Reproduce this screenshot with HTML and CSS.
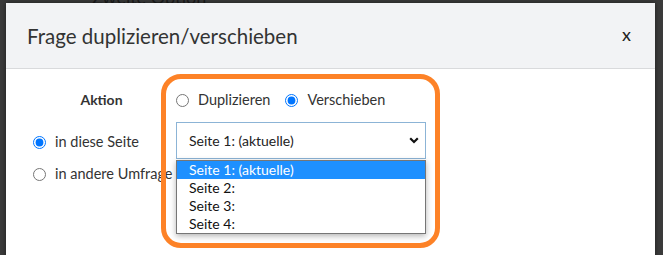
FILE: index.html
```html
<!DOCTYPE html>
<html lang="de">
<head>
    <meta charset="UTF-8">
    <title>Frage duplizieren/verschieben</title>
    <link rel="stylesheet" href="styles.css">
</head>
<body>
    <div class="seite">
        <p class="seite-text">Zweite Option</p>
    </div>

    <div class="modal">
        <div class="modal-kopf">
            <h2 class="modal-titel">Frage duplizieren/verschieben</h2>
            <span class="schliessen">x</span>
        </div>

        <div class="modal-inhalt">
            <div class="feld-label">Aktion</div>
            <div class="aktion-gruppe">
                <label class="option"><input type="radio" name="aktion"> Duplizieren</label>
                <label class="option"><input type="radio" name="aktion" checked> Verschieben</label>
            </div>

            <div class="ziel-liste">
                <label class="option"><input type="radio" name="ziel" checked> in diese Seite</label>
                <label class="option"><input type="radio" name="ziel"> in andere Umfrage</label>
            </div>
            <div class="auswahl-feld">
                <div class="auswahl">
                    <span>Seite 1: (aktuelle)</span>
                    <svg class="pfeil" width="10" height="7" viewBox="0 0 10 7">
                        <path d="M1.2 1.3 L5 5 L8.8 1.3" fill="none" stroke="#111" stroke-width="2.2"/>
                    </svg>
                </div>
                <ul class="auswahl-liste">
                    <li class="aktiv">Seite 1: (aktuelle)</li>
                    <li>Seite 2:</li>
                    <li>Seite 3:</li>
                    <li>Seite 4:</li>
                </ul>
                <!-- Markierung um die Aktion -->
                <div class="markierung"></div>
            </div>
        </div>
    </div>
</body>
</html>
```

FILE: styles.css
```css
/* Allgemein */
body {
    margin: 0;
    background: #3b3b3b;
    font-family: Lato, "Open Sans", sans-serif;
    height: 255px;
    overflow: hidden;
    position: relative;
}

/* Seite hinter dem Dialog */
.seite-text {
    position: absolute;
    left: 92px;
    top: -14px;
    margin: 0;
    font-size: 18px;
    color: #1d1d1d;
}

/* Dialog */
.modal {
    position: absolute;
    left: 6px;
    top: 3px;
    width: 649px;
    height: 270px;
    background: #fff;
    box-shadow: 0 0 5px rgba(0, 0, 0, 0.5);
}

.modal-kopf {
    height: 65px;
    display: flex;
    align-items: center;
    justify-content: space-between;
    padding: 0 24px 0 21px;
    background: #f2f3f5;
    border-bottom: 1px solid #d9dadc;
}

.modal-titel {
    margin: 0;
    font-size: 20.5px;
    font-weight: normal;
    color: #333;
}

.schliessen {
    font-size: 18px;
    color: #222;
    margin-top: -3px;
}

/* Inhalt */
.modal-inhalt {
    display: grid;
    grid-template-columns: 137px 250px;
    column-gap: 6px;
    row-gap: 12px;
    padding: 21px 0 0 27px;
    font-size: 14px;
    color: #333;
}

.feld-label {
    text-align: center;
    font-weight: bold;
    line-height: 20px;
}

.aktion-gruppe {
    display: flex;
    gap: 15px;
    line-height: 20px;
}

.option {
    display: flex;
    align-items: center;
    gap: 9px;
    white-space: nowrap;
    line-height: 20px;
    font-size: 14.5px;
}

.option input {
    margin: 0;
    width: 13px;
    height: 13px;
}

.ziel-liste {
    display: flex;
    flex-direction: column;
    gap: 12px;
    padding-top: 10px;
}

/* Auswahlfeld */
.auswahl-feld {
    position: relative;
}

.auswahl {
    height: 35px;
    display: flex;
    align-items: center;
    justify-content: space-between;
    padding: 0 6px 0 12px;
    border: 1px solid #8cb4d6;
    color: #222;
}

.auswahl-liste {
    position: absolute;
    left: 0;
    right: 0;
    top: 38px;
    margin: 0;
    padding: 0;
    list-style: none;
    background: #fff;
    border: 1px solid #767676;
    box-shadow: 0 2px 6px rgba(0, 0, 0, 0.3);
    z-index: 2;
}

.auswahl-liste li {
    height: 18px;
    line-height: 18px;
    padding-left: 12px;
    color: #111;
}

.auswahl-liste li.aktiv {
    background: #1e90ff;
    color: #fff;
}

/* Orange Markierung */
.markierung {
    position: absolute;
    left: -15px;
    top: -48px;
    width: 269px;
    height: 164px;
    border: 5px solid #fd8227;
    border-radius: 20px;
    z-index: 3;
}
```
